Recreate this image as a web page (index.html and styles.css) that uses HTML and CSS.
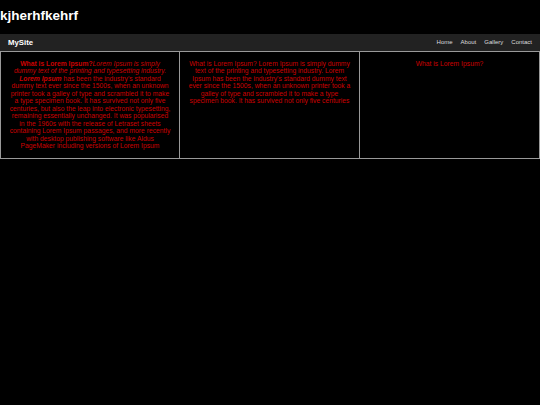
FILE: index.html
```html
<!DOCTYPE html>
<html>
<head>
<meta charset="utf-8">
<title>MySite</title>
<link rel="stylesheet" href="styles.css">
</head>
<body>
<h1 class="title">kjherhfkehrf</h1>
<nav class="navbar">
  <span class="brand">MySite</span>
  <ul class="links">
    <li>Home</li>
    <li>About</li>
    <li>Gallery</li>
    <li>Contact</li>
  </ul>
</nav>
<div class="columns">
  <div class="col">
    <p><b>What is Lorem Ipsum?</b><i>Lorem Ipsum is simply dummy text of the printing and typesetting industry.</i> <b><i>Lorem Ipsum</i></b> has been the industry's standard dummy text ever since the 1500s, when an unknown printer took a galley of type and scrambled it to make a type specimen book. It has survived not only five centuries, but also the leap into electronic typesetting, remaining essentially unchanged. It was popularised in the 1960s with the release of Letraset sheets containing Lorem Ipsum passages, and more recently with desktop publishing software like Aldus PageMaker including versions of Lorem Ipsum</p>
  </div>
  <div class="col">
    <p>What is Lorem Ipsum? Lorem Ipsum is simply dummy text of the printing and typesetting industry. Lorem Ipsum has been the industry's standard dummy text ever since the 1500s, when an unknown printer took a galley of type and scrambled it to make a type specimen book. It has survived not only five centuries</p>
  </div>
  <div class="col">
    <p>What is Lorem Ipsum?</p>
  </div>
</div>
</body>
</html>
```
FILE: styles.css
```css
html, body {
  margin: 0;
  padding: 0;
  background: #000;
  font-family: "Liberation Sans", Arial, sans-serif;
}
.title {
  margin: 0;
  padding: 8px 0 10px 0;
  font-size: 13.5px;
  line-height: 15.5px;
  font-weight: bold;
  color: #fff;
}
.navbar {
  display: flex;
  align-items: center;
  justify-content: space-between;
  height: 17px;
  background: #222;
  padding: 0 8px;
}
.brand {
  color: #fff;
  font-weight: bold;
  font-size: 7.8px;
}
.links {
  display: flex;
  gap: 8px;
  list-style: none;
  margin: 0;
  padding: 0;
  font-size: 6px;
  color: #ddd;
}
.columns {
  display: grid;
  grid-template-columns: repeat(3, 1fr);
}
.col {
  border: 1px solid #999;
  padding: 8px;
  text-align: center;
  color: #cc0000;
  font-size: 6.75px;
  line-height: 7.5px;
}
.col + .col {
  border-left: 0;
}
.col p {
  margin: 0;
}
```
